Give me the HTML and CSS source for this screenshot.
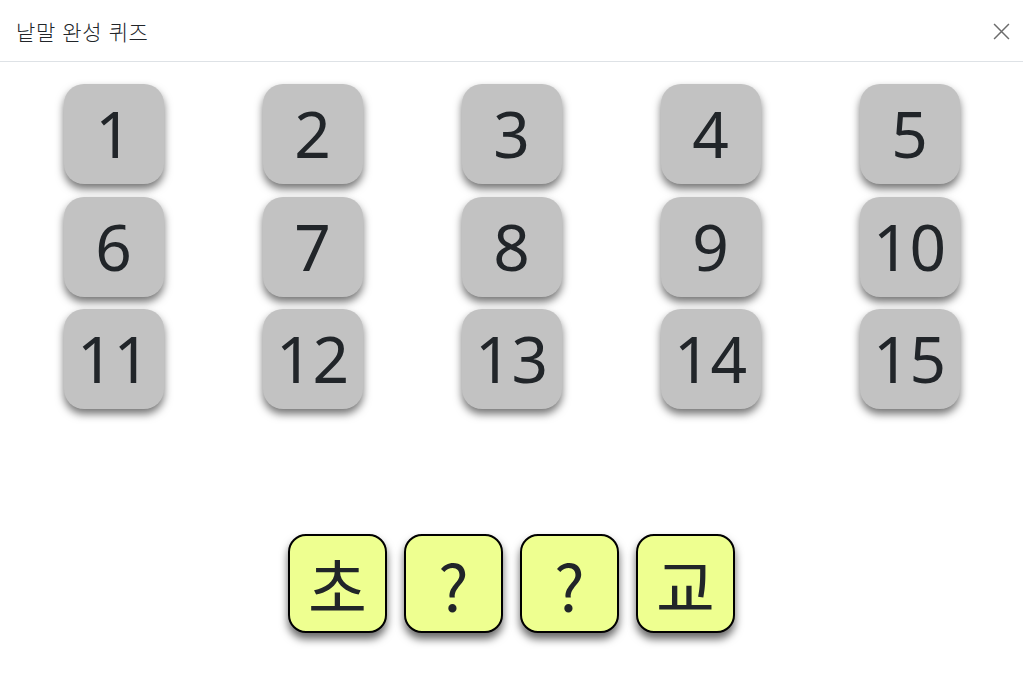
FILE: index.html
```html
<!DOCTYPE html>
<html lang="ko">
<head>
<meta charset="utf-8">
<title>낱말 완성 퀴즈</title>
<link rel="stylesheet" href="styles.css">
</head>
<body>
<div class="modal">
  <header class="modal-header">
    <h5 class="modal-title">낱말 완성 퀴즈</h5>
    <button class="btn-close" type="button" aria-label="Close">
      <svg viewBox="0 0 16 16" width="17" height="17"><path d="M1 1L15 15M15 1L1 15" stroke="#6c6c6c" stroke-width="1.4" fill="none"/></svg>
    </button>
  </header>
  <main class="modal-body">
    <div class="num-grid">
      <div class="cell"><div class="tile">1</div></div>
      <div class="cell"><div class="tile">2</div></div>
      <div class="cell"><div class="tile">3</div></div>
      <div class="cell"><div class="tile">4</div></div>
      <div class="cell"><div class="tile">5</div></div>
      <div class="cell"><div class="tile">6</div></div>
      <div class="cell"><div class="tile">7</div></div>
      <div class="cell"><div class="tile">8</div></div>
      <div class="cell"><div class="tile">9</div></div>
      <div class="cell"><div class="tile">10</div></div>
      <div class="cell"><div class="tile">11</div></div>
      <div class="cell"><div class="tile">12</div></div>
      <div class="cell"><div class="tile">13</div></div>
      <div class="cell"><div class="tile">14</div></div>
      <div class="cell"><div class="tile">15</div></div>
    </div>
    <div class="answer">
      <div class="letter">초</div>
      <div class="letter">?</div>
      <div class="letter">?</div>
      <div class="letter">교</div>
    </div>
  </main>
</div>
</body>
</html>
```
FILE: styles.css
```css
html, body {
  margin: 0;
  padding: 0;
  background: #fff;
}
body {
  font-family: "Noto Sans", "Noto Sans CJK KR", sans-serif;
  color: #212529;
}
.modal-header {
  display: flex;
  align-items: center;
  justify-content: space-between;
  padding: 16px 13px 15px 16px;
  border-bottom: 1px solid #dee2e6;
}
.modal-title {
  margin: 0;
  font-family: "Noto Sans CJK KR", sans-serif;
  font-size: 21px;
  font-weight: 300;
  letter-spacing: 0.6px;
  line-height: 30px;
}
.btn-close {
  border: 0;
  background: transparent;
  padding: 0;
  width: 17px;
  height: 17px;
  display: flex;
  cursor: pointer;
}
.modal-body {
  padding: 22px 14px 50px;
}
.num-grid {
  display: grid;
  grid-template-columns: repeat(5, 1fr);
  grid-auto-rows: 100px;
  row-gap: 12.5px;
}
.cell {
  display: flex;
  justify-content: center;
}
.tile {
  width: 100px;
  height: 100px;
  border-radius: 20px;
  background: #c2c2c2;
  box-shadow: 0 5px 9px rgba(0, 0, 0, 0.55);
  display: flex;
  align-items: center;
  justify-content: center;
  font-size: 64px;
  font-weight: 400;
  line-height: 1;
}
.answer {
  margin-top: 125px;
  display: flex;
  justify-content: center;
  gap: 17px;
}
.letter {
  box-sizing: border-box;
  width: 99px;
  height: 99px;
  border: 2px solid #000;
  border-radius: 18px;
  background: #eeff90;
  box-shadow: 0 6px 9px rgba(0, 0, 0, 0.6);
  display: flex;
  align-items: center;
  justify-content: center;
  font-family: "Noto Sans CJK KR", sans-serif;
  font-size: 64px;
  font-weight: 400;
  line-height: 1;
}
```
